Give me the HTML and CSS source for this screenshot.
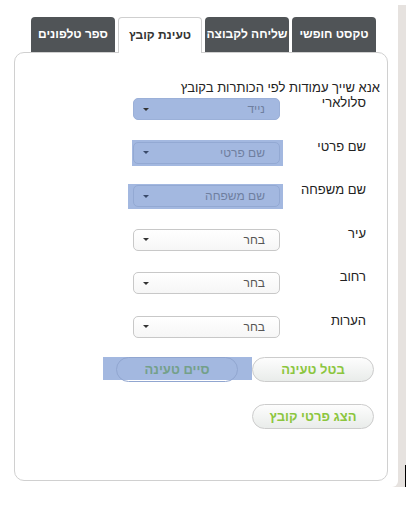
FILE: index.html
```html
<!DOCTYPE html>
<html lang="he">
<head>
    <meta charset="UTF-8" />
    <title>טעינת קובץ</title>
    <link rel="stylesheet" href="styles.css">
</head>
<body>
    <div class="frame">
        <div class="tabs" dir="rtl">
            <div class="tab">טקסט חופשי</div>
            <div class="tab">שליחה לקבוצה</div>
            <div class="tab active">טעינת קובץ</div>
            <div class="tab">ספר טלפונים</div>
        </div>

        <div class="panel" dir="rtl">
            <div class="intro">אנא שייך עמודות לפי הכותרות בקובץ</div>

            <div class="row">
                <label class="lbl">סלולארי</label>
                <div class="select hl">
                    <span>נייד</span><i class="arrow"></i>
                </div>
            </div>
            <div class="row">
                <label class="lbl lbl-hl">שם פרטי</label>
                <div class="hl-box hl-box-a">
                    <div class="select clear"><span>שם פרטי</span><i class="arrow"></i></div>
                </div>
            </div>
            <div class="row">
                <label class="lbl lbl-hl">שם משפחה</label>
                <div class="hl-box hl-box-b">
                    <div class="select clear"><span>שם משפחה</span><i class="arrow"></i></div>
                </div>
            </div>
            <div class="row">
                <label class="lbl">עיר</label>
                <div class="select"><span>בחר</span><i class="arrow"></i></div>
            </div>
            <div class="row">
                <label class="lbl">רחוב</label>
                <div class="select"><span>בחר</span><i class="arrow"></i></div>
            </div>
            <div class="row">
                <label class="lbl">הערות</label>
                <div class="select"><span>בחר</span><i class="arrow"></i></div>
            </div>

            <div class="actions">
                <button class="btn">בטל טעינה</button>
                <div class="btn-hl">
                    <button class="btn btn-off">סיים טעינה</button>
                </div>
            </div>
            <div class="actions second">
                <button class="btn">הצג פרטי קובץ</button>
            </div>
        </div>
        <div class="caret"></div>
    </div>
</body>
</html>
```

FILE: styles.css
```css
body {
    margin: 0;
    background: #fff;
    font-family: "Liberation Sans", Arial, "DejaVu Sans", sans-serif;
    color: #333;
}
.frame {
    position: relative;
    width: 398px;
    height: 487px;
    background: #fff;
    border-bottom-right-radius: 6px;
    box-sizing: border-box;
    padding-top: 17px;
}
/* grey edge behind the frame, right and bottom */
.frame::before {
    content: "";
    position: absolute;
    z-index: -1;
    left: 3px;
    top: 5px;
    width: 403px;
    height: 489px;
    background: #e6e2df;
    border-radius: 0 0 6px 0;
}
.tabs {
    position: relative;
    z-index: 1;
    display: flex;
    gap: 3px;
    margin-left: 14px;
    width: 374px;
    padding-right: 12px;
    box-sizing: border-box;
    height: 35px;
}
.tab {
    width: 84px;
    height: 35px;
    box-sizing: border-box;
    background: #505457;
    color: #fff;
    font-size: 12px;
    font-weight: bold;
    line-height: 35px;
    text-align: center;
    border-radius: 4px 4px 0 0;
}
.tab.active {
    background: #fff;
    color: #333;
    border: 1px solid #cfcfcf;
    border-bottom: none;
    height: 36px;
    line-height: 34px;
}
.panel {
    margin-left: 14px;
    width: 374px;
    height: 429px;
    box-sizing: border-box;
    border: 1px solid #d0d0d0;
    border-radius: 10px;
    padding: 27px 7px 0 0;
}
.intro {
    font-size: 13px;
    line-height: 15px;
    color: #222;
}
.row {
    display: flex;
    height: 25px;
    margin-bottom: 18.6px;
}
.lbl {
    width: 100px;
    box-sizing: border-box;
    padding-right: 14px;
    font-size: 13px;
    line-height: 15px;
    color: #222;
}
.lbl-hl {
    width: 97px;
    padding-right: 14px;
}
.select {
    margin-top: 3px;
    width: 147px;
    height: 22px;
    box-sizing: border-box;
    border: 1px solid #c8c8c8;
    border-radius: 5px;
    background: linear-gradient(#fff, #f6f6f6);
    display: flex;
    align-items: center;
    justify-content: space-between;
    padding: 0 14px 0 9px;
    font-size: 12px;
    color: #555;
}
.arrow {
    width: 0;
    height: 0;
    border-left: 3px solid transparent;
    border-right: 3px solid transparent;
    border-top: 3px solid #333;
}
.select.hl {
    background: #a3b8e0;
    border-color: #9bb0d8;
    color: #6f7f9f;
}
.hl-box {
    background: #a3b8e0;
    align-self: flex-start;
}
.hl-box-a {
    margin-top: 1px;
    padding: 2px 3px 2px 1px;
}
.hl-box-b {
    margin-top: 2px;
    padding: 1px 3px 2px 5px;
}
.select.clear {
    margin-top: 0;
    background: transparent;
    border-color: #93a9d3;
    color: #6f7f9f;
}
.select.clear .arrow { border-top-color: #3a4a6a; }
.actions {
    display: flex;
    padding-right: 6px;
    height: 25px;
}
.second {
    margin-top: 22px;
}
.btn {
    width: 122px;
    height: 25px;
    border: 1px solid #cccccc;
    border-radius: 13px;
    background: linear-gradient(#fdfdfd, #e9ecea);
    font-family: "Liberation Sans", Arial, sans-serif;
    font-size: 13px;
    font-weight: bold;
    color: #8cc63e;
    padding: 0;
}
.btn-hl {
    background: #a3b8e0;
    height: 23px;
    padding: 0 14px 0 13px;
}
.btn-off {
    background: transparent;
    border-color: #91a6d0;
    color: #74a08a;
}
.caret {
    position: absolute;
    left: 405px;
    top: 465px;
    width: 1px;
    height: 30px;
    background: #000;
}
```
